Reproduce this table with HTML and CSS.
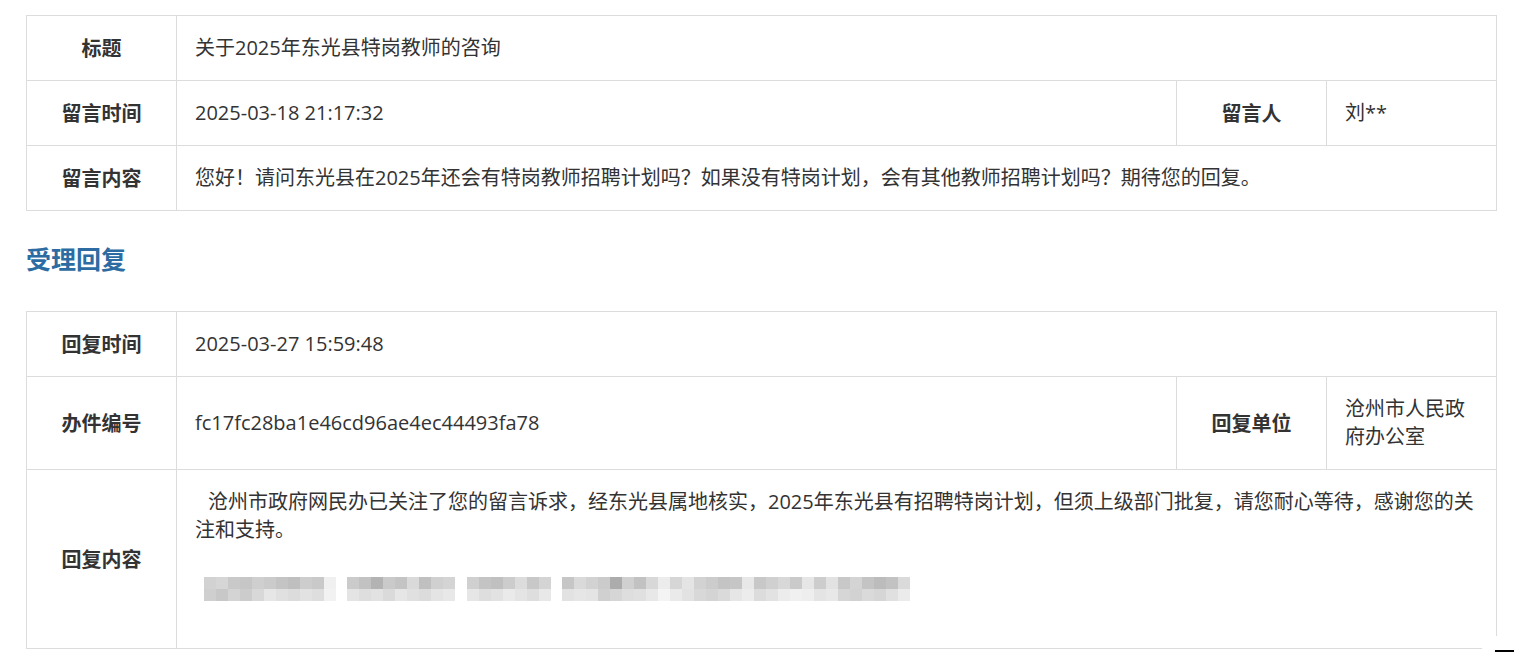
FILE: index.html
```html
<!DOCTYPE html>
<html lang="zh-CN">
<head>
<meta charset="utf-8">
<title>留言详情</title>
<link rel="stylesheet" href="styles.css">
</head>
<body>
<div class="page">
  <table class="info">
    <colgroup><col class="c-label"><col class="c-value"><col class="c-label"><col class="c-side"></colgroup>
    <tr><th>标题</th><td colspan="3">关于2025年东光县特岗教师的咨询</td></tr>
    <tr><th>留言时间</th><td>2025-03-18 21:17:32</td><th>留言人</th><td>刘**</td></tr>
    <tr><th>留言内容</th><td colspan="3">您好！请问东光县在2025年还会有特岗教师招聘计划吗？如果没有特岗计划，会有其他教师招聘计划吗？期待您的回复。</td></tr>
  </table>

  <h2 class="section-title">受理回复</h2>

  <table class="info">
    <colgroup><col class="c-label"><col class="c-value"><col class="c-label"><col class="c-side"></colgroup>
    <tr><th>回复时间</th><td colspan="3">2025-03-27 15:59:48</td></tr>
    <tr><th>办件编号</th><td>fc17fc28ba1e46cd96ae4ec44493fa78</td><th>回复单位</th><td>沧州市人民政府办公室</td></tr>
    <tr class="reply-row"><th>回复内容</th><td colspan="3" class="reply">
      <p class="reply-text">沧州市政府网民办已关注了您的留言诉求，经东光县属地核实，2025年东光县有招聘特岗计划，但须上级部门批复，请您耐心等待，感谢您的关注和支持。</p>
      <div class="mosaic" aria-hidden="true">
        <span class="mz mz1"></span><span class="mz mz2"></span><span class="mz mz3"></span><span class="mz mz4"></span>
      </div>
    </td></tr>
  </table>
</div>
<div class="corner"></div>
</body>
</html>
```

FILE: styles.css
```css
html, body {
  margin: 0;
  background: #fff;
}
body {
  font-family: "Open Sans", "Noto Sans CJK SC", sans-serif;
  color: #333;
}
.page {
  padding: 15px 0 0 26px;
}
.info {
  border-collapse: collapse;
  table-layout: fixed;
  width: 1471px;
}
.c-label { width: 150px; }
.c-value { width: 1000px; }
.c-side { width: 170px; }

.info th,
.info td {
  border: 1px solid #dcdcdc;
  padding: 18px 18px;
  font-size: 20px;
  line-height: 28px;
  color: #333;
  vertical-align: middle;
}
.info th {
  font-family: "Noto Sans CJK SC", sans-serif;
  font-weight: bold;
  text-align: center;
}
.info td {
  text-align: left;
  font-weight: normal;
}

.section-title {
  margin: 32px 0 38px;
  font-family: "Noto Sans CJK SC", sans-serif;
  font-size: 25px;
  line-height: 30px;
  font-weight: bold;
  color: #2d6ca2;
}

.info td.reply {
  vertical-align: top;
  padding-bottom: 47px;
}
.reply-text {
  margin: 0;
  text-indent: 13px;
}

.mosaic {
  display: flex;
  margin: 33px 0 0 9px;
  height: 24px;
}
.mz {
  display: block;
  height: 24px;
  background-repeat: no-repeat;
  background-size: 100% 12px, 100% 12px;
  background-position: 0 0, 0 12px;
}
.mz1 {
  width: 132px;
  background-image:
    linear-gradient(90deg, #d2d2d2 0 12px, #d6d6d6 12px 24px, #c9c9c9 24px 36px, #c6c6c6 36px 48px, #cfcfcf 48px 60px, #cbcbcb 60px 72px, #c4c4c4 72px 84px, #bfbfbf 84px 96px, #cdcdcd 96px 108px, #c9c9c9 108px 120px, #f0f0f0 120px 132px),
    linear-gradient(90deg, #cfcfcf 0 12px, #c8c8c8 12px 24px, #d4d4d4 24px 36px, #cccccc 36px 48px, #d8d8d8 48px 60px, #e6e6e6 60px 72px, #e0e0e0 72px 84px, #dcdcdc 84px 96px, #e2e2e2 96px 108px, #dedede 108px 120px, #f2f2f2 120px 132px);
}
.mz2 {
  width: 108px;
  margin-left: 11px;
  background-image:
    linear-gradient(90deg, #cbcbcb 0 12px, #c2c2c2 12px 24px, #b3b3b3 24px 36px, #cacaca 36px 48px, #c4c4c4 48px 60px, #dadada 60px 72px, #c0c0c0 72px 84px, #d0d0d0 84px 96px, #d4d4d4 96px 108px),
    linear-gradient(90deg, #e4e4e4 0 12px, #dedede 12px 24px, #e2e2e2 24px 36px, #dadada 36px 48px, #e6e6e6 48px 60px, #e0e0e0 60px 72px, #dcdcdc 72px 84px, #e4e4e4 84px 96px, #e8e8e8 96px 108px);
}
.mz3 {
  width: 84px;
  margin-left: 12px;
  background-image:
    linear-gradient(90deg, #d0d0d0 0 12px, #c4c4c4 12px 24px, #c0c0c0 24px 36px, #cccccc 36px 48px, #dcdcdc 48px 60px, #c8c8c8 60px 72px, #d4d4d4 72px 84px),
    linear-gradient(90deg, #e6e6e6 0 12px, #dedede 12px 24px, #e2e2e2 24px 36px, #eaeaea 36px 48px, #e4e4e4 48px 60px, #dedede 60px 72px, #e8e8e8 72px 84px);
}
.mz4 {
  width: 348px;
  margin-left: 11px;
  background-image:
    linear-gradient(90deg, #c6c6c6 0 12px, #dadada 12px 24px, #d2d2d2 24px 36px, #cbcbcb 36px 48px, #acacac 48px 60px, #d0d0d0 60px 72px, #c2c2c2 72px 84px, #d8d8d8 84px 96px, #ececec 96px 108px, #d6d6d6 108px 120px, #e4e4e4 120px 132px, #d2d2d2 132px 144px, #cccccc 144px 156px, #c4c4c4 156px 168px, #c6c6c6 168px 180px, #e8e8e8 180px 192px, #c8c8c8 192px 204px, #d0d0d0 204px 216px, #d8d8d8 216px 228px, #cacaca 228px 240px, #e6e6e6 240px 252px, #cdcdcd 252px 264px, #e2e2e2 264px 276px, #c8c8c8 276px 288px, #d4d4d4 288px 300px, #c4c4c4 300px 312px, #bcbcbc 312px 324px, #c2c2c2 324px 336px, #dadada 336px 348px),
    linear-gradient(90deg, #e2e2e2 0 12px, #e6e6e6 12px 24px, #e4e4e4 24px 36px, #d0d0d0 36px 48px, #d6d6d6 48px 60px, #dedede 60px 72px, #e0e0e0 72px 84px, #e8e8e8 84px 96px, #f4f4f4 96px 108px, #eaeaea 108px 120px, #e2e2e2 120px 132px, #d8d8d8 132px 144px, #d4d4d4 144px 156px, #dadada 156px 168px, #e6e6e6 168px 180px, #ececec 180px 192px, #dcdcdc 192px 204px, #e2e2e2 204px 216px, #ececec 216px 228px, #f0f0f0 228px 240px, #eeeeee 240px 252px, #e4e4e4 252px 264px, #e8e8e8 264px 276px, #d6d6d6 276px 288px, #d2d2d2 288px 300px, #dadada 300px 312px, #d6d6d6 312px 324px, #e0e0e0 324px 336px, #ebebeb 336px 348px);
}

.corner {
  position: absolute;
  left: 1482px;
  top: 636px;
  width: 32px;
  height: 16px;
  background: #fff;
}
.corner::after {
  content: "";
  position: absolute;
  left: 13px;
  top: 14px;
  width: 19px;
  height: 2px;
  background: #000;
}
```
